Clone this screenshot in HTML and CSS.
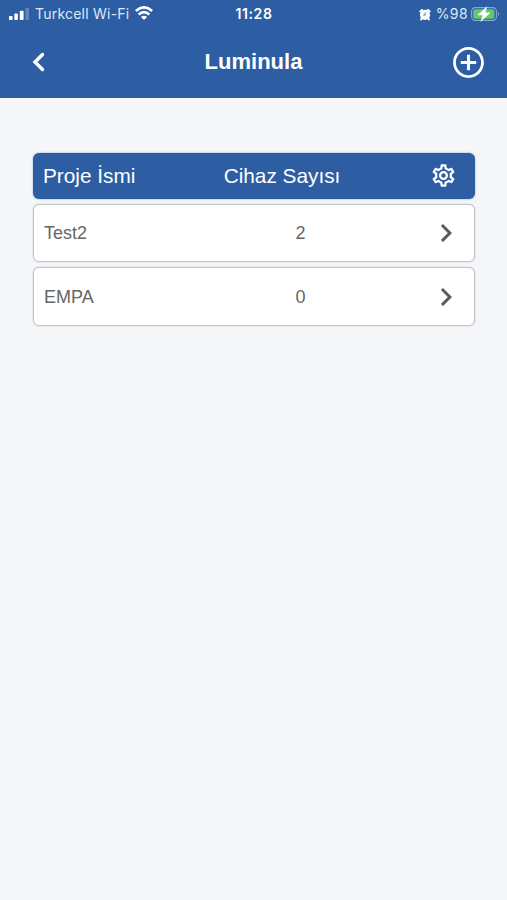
FILE: index.html
```html
<!DOCTYPE html>
<html lang="tr">
<head>
<meta charset="utf-8">
<title>Luminula</title>
<link rel="stylesheet" href="styles.css">
</head>
<body>
<header class="top">
  <div class="status">
    <div class="status-left">
      <svg class="signal" width="20" height="12" viewBox="0 0 20 12" fill="#fff"><rect x="0" y="8" width="3.6" height="4" rx=".8"/><rect x="5.3" y="5.6" width="3.6" height="6.4" rx=".8"/><rect x="10.8" y="2.8" width="3.8" height="9.2" rx=".8"/><rect x="16.4" y="0" width="3.6" height="12" rx=".8" opacity=".25"/></svg>
      <span class="carrier">Turkcell Wi-Fi</span>
      <svg class="wifi" width="18" height="14" viewBox="0 0 18 14" fill="none" stroke="#fff" stroke-width="2.7"><path d="M.8 5Q9-2.2 17.2 5"/><path d="M3.6 8.500Q9 3.800 14.400 8.500"/><path d="M9 14 5.900 11Q9 8.300 12.100 11Z" fill="#fff" stroke="none"/></svg>
    </div>
    <span class="clock">11:28</span>
    <div class="status-right">
      <svg width="12" height="13" viewBox="0 0 12 13"><circle cx="6" cy="6.8" r="5.1" fill="#fff"/><path d="M1.300 3.400 3 1.900M10.700 3.400 9 1.900M2.700 10.600l-.6.8M9.300 10.600l.6.8" stroke="#fff" stroke-width="2" stroke-linecap="round"/><path d="M6.200 4.500v2.600H4.200" fill="none" stroke="#2d5ea4" stroke-width=".8"/></svg>
      <span class="percent">%98</span>
      <svg width="30" height="16" viewBox="0 0 30 16"><rect x=".6" y="1.6" width="24.8" height="12.8" rx="3.8" fill="none" stroke="#8da9d0" stroke-width="1.1"/><rect x="2.2" y="3.2" width="21.2" height="9.6" rx="2.2" fill="#62cb69"/><path d="M27 5.800q2.100 2.200 0 4.400z" fill="#8da9d0"/><path d="M15.800.8 6.800 9h5l-2 6.400 9.400-8.600h-5z" fill="#fff" stroke="#fff" stroke-width=".4"/></svg>
    </div>
  </div>
  <nav class="bar">
    <svg class="back" width="36" height="36" viewBox="0 0 24 24" fill="none" stroke="#fff" stroke-width="2.3" stroke-linecap="round"><path d="m15 7-5 5 5 5"/></svg>
    <h1>Luminula</h1>
    <svg class="add" width="37" height="37" viewBox="0 0 24 24" fill="#fff"><path d="M13 7h-2v4H7v2h4v4h2v-4h4v-2h-4V7zm-1-5C6.480 2 2 6.480 2 12s4.480 10 10 10 10-4.480 10-10S17.520 2 12 2zm0 18.200c-4.520 0-8.200-3.680-8.200-8.200S7.480 3.800 12 3.800s8.200 3.680 8.200 8.200-3.680 8.200-8.200 8.200z"/></svg>
  </nav>
</header>
<main class="list">
  <div class="row head">
    <span>Proje İsmi</span>
    <span class="count">Cihaz Sayısı</span>
    <svg class="gear" width="27" height="27" viewBox="0 0 24 24" fill="#fff"><path d="M19.430 12.980c.04-.32.07-.64.07-.98 0-.34-.03-.66-.07-.98l2.110-1.650c.19-.15.24-.42.12-.64l-2-3.460c-.09-.16-.26-.25-.44-.25-.06 0-.12.01-.17.03l-2.490 1c-.52-.4-1.080-.73-1.690-.98l-.38-2.650C14.460 2.180 14.250 2 14 2h-4c-.25 0-.46.18-.49.42l-.38 2.650c-.61.25-1.170.59-1.690.98l-2.490-1c-.06-.02-.12-.03-.18-.03-.17 0-.34.09-.43.25l-2 3.460c-.13.22-.07.49.12.64l2.110 1.650c-.04.32-.07.65-.07.98 0 .33.03.66.07.98l-2.110 1.650c-.19.15-.24.42-.12.64l2 3.460c.09.16.26.25.44.25.06 0 .12-.01.17-.03l2.490-1c.52.4 1.080.73 1.690.98l.38 2.650c.03.24.24.42.49.42h4c.25 0 .46-.18.49-.42l.38-2.650c.61-.25 1.170-.59 1.690-.98l2.490 1c.06.02.12.03.18.03.17 0 .34-.09.43-.25l2-3.460c.12-.22.07-.49-.12-.64l-2.110-1.650zm-1.980-1.710c.04.31.05.52.05.73 0 .21-.02.43-.05.73l-.14 1.130.89.7 1.080.84-.7 1.210-1.270-.51-1.040-.42-.9.68c-.43.32-.84.56-1.250.73l-1.060.43-.16 1.130-.2 1.350h-1.400l-.19-1.350-.16-1.130-1.060-.43c-.43-.18-.83-.41-1.230-.71l-.91-.7-1.060.43-1.270.51-.7-1.210 1.080-.84.89-.7-.14-1.130c-.03-.31-.05-.54-.05-.74s.02-.43.05-.73l.14-1.130-.89-.7-1.080-.84.7-1.210 1.270.51 1.040.42.9-.68c.43-.32.84-.56 1.250-.73l1.060-.43.16-1.130.2-1.350h1.390l.19 1.350.16 1.130 1.060.43c.43.18.83.41 1.230.71l.91.7 1.060-.43 1.270-.51.7 1.210-1.070.85-.89.7.14 1.130zM12 8c-2.210 0-4 1.790-4 4s1.790 4 4 4 4-1.790 4-4-1.790-4-4-4zm0 6c-1.100 0-2-.9-2-2s.9-2 2-2 2 .9 2 2-.9 2-2 2z"/></svg>
  </div>
  <div class="row item">
    <span>Test2</span>
    <span class="count">2</span>
    <svg class="go" width="36" height="36" viewBox="0 0 24 24" fill="#5c5c5c"><path d="M10 6 8.590 7.410 13.170 12l-4.580 4.590L10 18l6-6z"/></svg>
  </div>
  <div class="row item">
    <span>EMPA</span>
    <span class="count">0</span>
    <svg class="go" width="36" height="36" viewBox="0 0 24 24" fill="#5c5c5c"><path d="M10 6 8.590 7.410 13.170 12l-4.580 4.590L10 18l6-6z"/></svg>
  </div>
</main>
</body>
</html>
```
FILE: styles.css
```css
* { box-sizing: border-box; }
body {
  margin: 0;
  min-height: 900px;
  background: #f4f6f8;
  font-family: "Liberation Sans", Arial, sans-serif;
}
svg { display: block; flex: none; }
.top {
  height: 98px;
  background: #2d5ea4;
  color: #fff;
}
.status {
  height: 28px;
  padding: 0 6px 0 9px;
  display: grid;
  grid-template-columns: 1fr auto 1fr;
  align-items: center;
  font-family: Inter, sans-serif;
  font-size: 14px;
  line-height: 28px;
  white-space: nowrap;
}
.status-left, .status-right { display: flex; align-items: center; }
.status-right { justify-content: flex-end; }
.carrier { margin: 0 6px; color: #dfe8f5; letter-spacing: .22px; }
.wifi { margin-top: -2px; }
.clock { font-weight: 600; letter-spacing: .6px; margin-right: 2px; }
.percent { margin: 0 3px 0 5px; color: #dfe8f5; letter-spacing: .4px; }
.bar {
  height: 68px;
  padding: 0 20px;
  display: grid;
  grid-template-columns: 37px 1fr 37px;
  align-items: center;
}
h1 {
  margin: 0;
  font-size: 22px;
  line-height: 28px;
  text-align: center;
}
.list {
  margin: 54.5px 32px 0 33px;
  display: flex;
  flex-direction: column;
  gap: 5px;
}
.row {
  display: grid;
  grid-template-columns: 139px 236px 1fr;
  align-items: center;
  border-radius: 6px;
}
.count { text-align: center; }
.head {
  height: 46px;
  padding-left: 10px;
  background: #2d5ea4;
  color: #fff;
  font-size: 20.8px;
  box-shadow: 0 0 2px #7d9cc9;
}
.head .count { padding-right: 36px; }
.gear { margin-left: 12px; }
.item {
  height: 58.5px;
  padding: 1px 0 0 10px;
  background: #fff;
  border: 1px solid #c3c4cc;
  box-shadow: 0 0 1.5px #b9bac6;
  color: #666;
  font-size: 18px;
}
.item span { padding-top: 1px; }
.item .count { padding-right: 1px; }
.go { margin-left: 9px; }
```
